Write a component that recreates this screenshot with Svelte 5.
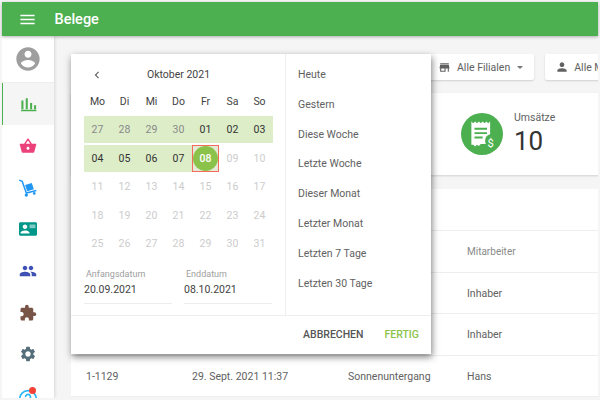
<script>
  const weekdays = ['Mo', 'Di', 'Mi', 'Do', 'Fr', 'Sa', 'So'];
  const weeks = [
    ['27', '28', '29', '30', '01', '02', '03'],
    ['04', '05', '06', '07', '08', '09', '10'],
    ['11', '12', '13', '14', '15', '16', '17'],
    ['18', '19', '20', '21', '22', '23', '24'],
    ['25', '26', '27', '28', '29', '30', '31']
  ];
  const ranges = ['Heute', 'Gestern', 'Diese Woche', 'Letzte Woche', 'Dieser Monat', 'Letzter Monat', 'Letzten 7 Tage', 'Letzten 30 Tage'];
  const rows = [
    { id: '1-1131', date: '1. Okt. 2021 09:12', shop: 'Sonnenuntergang', who: 'Inhaber' },
    { id: '1-1130', date: '30. Sept. 2021 16:48', shop: 'Sonnenuntergang', who: 'Inhaber' },
    { id: '1-1129', date: '29. Sept. 2021 11:37', shop: 'Sonnenuntergang', who: 'Hans' }
  ];

  function dayClass(w, d) {
    if (w === 0 && d < 4) return 'day in muted';
    if (w === 0) return 'day in';
    if (w === 1 && d < 4) return 'day in';
    if (w === 1 && d === 4) return 'day today';
    return 'day off';
  }
</script>

<div class="page">
  <header class="appbar">
    <svg viewBox="0 0 24 24" width="19" height="19"><path d="M3 18h18v-2H3v2zm0-5h18v-2H3v2zm0-7v2h18V6H3z" fill="#fff"/></svg>
    <span class="title">Belege</span>
  </header>

  <div class="layout">
    <nav class="sidebar">
      <div class="nav profile">
        <svg viewBox="0 0 24 24" width="28" height="28"><path fill="#9e9e9e" d="M12 2C6.48 2 2 6.48 2 12s4.48 10 10 10 10-4.48 10-10S17.52 2 12 2zm0 3c1.66 0 3 1.34 3 3s-1.34 3-3 3-3-1.34-3-3 1.34-3 3-3zm0 14.2c-2.5 0-4.71-1.28-6-3.22.03-1.99 4-3.08 6-3.08 1.99 0 5.97 1.09 6 3.08-1.29 1.94-3.5 3.22-6 3.22z"/></svg>
      </div>
      <div class="nav active">
        <svg viewBox="0 0 24 24" width="19" height="19"><path fill="#4caf50" d="M3 7h2.600v11H3zM8.500 4h2.600v14H8.500zM14 10h2.600v8H14zM19 13h2.600v5H19zM2.500 18.500h19.500V20.500H2.500z"/></svg>
      </div>
      <div class="nav">
        <svg viewBox="0 0 24 24" width="18" height="18"><path fill="#ec407a" d="M17.21 9l-4.38-6.56c-.19-.28-.51-.42-.83-.42-.32 0-.64.14-.83.43L6.79 9H2c-.55 0-1 .45-1 1 0 .09.01.18.04.27l2.54 9.27c.23.84 1 1.46 1.92 1.46h13c.92 0 1.69-.62 1.93-1.46l2.54-9.27L23 10c0-.55-.45-1-1-1h-4.79zM9 9l3-4.4L15 9H9zm3 8c-1.1 0-2-.9-2-2s.9-2 2-2 2 .9 2 2-.9 2-2 2z"/></svg>
      </div>
      <div class="nav">
        <svg viewBox="0 0 24 24" width="20" height="20">
          <path d="M1.500 2.500L5 4l5 14 12-3" fill="none" stroke="#2196f3" stroke-width="1.800"/>
          <path fill="#2196f3" d="M8.500 8.500l8-2.500 2.500 7.500-8 2.500z"/>
          <circle cx="10" cy="20.500" r="2" fill="#2196f3"/>
          <circle cx="19.500" cy="18.500" r="1.600" fill="#2196f3"/>
        </svg>
      </div>
      <div class="nav">
        <svg viewBox="0 0 24 24" width="18" height="18"><path fill="#009688" d="M22 3H2C.9 3 0 3.900 0 5v14c0 1.100.9 2 2 2h20c1.100 0 2-.9 2-2V5c0-1.100-.9-2-2-2zM8 6c1.660 0 3 1.340 3 3s-1.340 3-3 3-3-1.340-3-3 1.340-3 3-3zm6 12H2v-1c0-2 4-3.100 6-3.100s6 1.100 6 3.100v1z"/><path fill="#80cbc4" d="M14 6h8v5h-8z"/></svg>
      </div>
      <div class="nav">
        <svg viewBox="0 0 24 24" width="18" height="18"><path fill="#3f51b5" d="M16 11c1.660 0 2.990-1.340 2.990-3S17.660 5 16 5c-1.660 0-3 1.340-3 3s1.340 3 3 3zm-8 0c1.660 0 2.990-1.340 2.990-3S9.660 5 8 5C6.340 5 5 6.340 5 8s1.340 3 3 3zm0 2c-2.330 0-7 1.170-7 3.500V19h14v-2.500c0-2.330-4.670-3.500-7-3.500zm8 0c-.29 0-.62.020-.97.050 1.160.84 1.970 1.970 1.970 3.450V19h6v-2.500c0-2.330-4.670-3.500-7-3.500z"/></svg>
      </div>
      <div class="nav">
        <svg viewBox="0 0 24 24" width="18" height="18"><path fill="#795548" d="M20.500 11H19V7c0-1.100-.9-2-2-2h-4V3.500C13 2.120 11.880 1 10.500 1S8 2.120 8 3.500V5H4c-1.100 0-1.990.9-1.990 2v3.800H3.500c1.490 0 2.700 1.210 2.700 2.700s-1.210 2.700-2.700 2.700H2V20c0 1.100.9 2 2 2h3.800v-1.500c0-1.490 1.210-2.700 2.700-2.700 1.490 0 2.700 1.210 2.700 2.700V22H17c1.100 0 2-.9 2-2v-4h1.500c1.380 0 2.500-1.120 2.500-2.500S21.880 11 20.500 11z"/></svg>
      </div>
      <div class="nav">
        <svg viewBox="0 0 24 24" width="18" height="18"><path fill="#546e7a" d="M19.140 12.940c.04-.3.060-.61.060-.94 0-.32-.02-.64-.07-.94l2.030-1.580c.18-.14.23-.41.120-.61l-1.920-3.320c-.12-.22-.37-.29-.59-.22l-2.390.96c-.5-.38-1.030-.7-1.620-.94l-.36-2.540c-.04-.24-.24-.41-.48-.41h-3.840c-.24 0-.43.170-.47.410l-.36 2.540c-.59.240-1.130.57-1.620.94l-2.390-.96c-.22-.08-.47 0-.59.220L2.740 8.870c-.12.210-.08.470.12.610l2.030 1.580c-.05.300-.09.630-.09.940s.02.640.07.940l-2.030 1.580c-.18.140-.23.410-.12.610l1.920 3.320c.12.220.37.290.59.220l2.390-.96c.5.380 1.030.7 1.620.94l.36 2.540c.05.240.24.410.48.410h3.840c.24 0 .44-.17.470-.41l.36-2.540c.59-.24 1.130-.56 1.620-.94l2.390.96c.22.080.47 0 .59-.22l1.920-3.320c.12-.22.070-.47-.12-.61l-2.010-1.580zM12 15.600c-1.980 0-3.600-1.620-3.600-3.600s1.620-3.600 3.600-3.600 3.600 1.620 3.600 3.600-1.620 3.600-3.600 3.600z"/></svg>
      </div>
      <div class="nav help">
        <svg viewBox="0 0 24 24" width="20" height="20"><circle cx="12" cy="12" r="10" fill="none" stroke="#29b6f6" stroke-width="2"/><path d="M9 9.500a3 3 0 1 1 4.500 2.600c-1 .6-1.500 1.200-1.500 2.400M12 16v2" fill="none" stroke="#29b6f6" stroke-width="2"/></svg>
        <span class="dot"></span>
      </div>
    </nav>

    <main class="content">
      <div class="filters">
        <button class="filter">
          <svg viewBox="0 0 24 24" width="13" height="13"><path fill="#616161" d="M20 4H4v2h16V4zm1 10v-2l-1-5H4l-1 5v2h1v6h10v-6h4v6h2v-6h1zm-9 4H6v-4h6v4z"/></svg>
          <span>Alle Filialen</span>
          <span class="caret"></span>
        </button>
        <button class="filter second">
          <svg viewBox="0 0 24 24" width="14" height="14"><path fill="#616161" d="M12 12c2.210 0 4-1.790 4-4s-1.790-4-4-4-4 1.790-4 4 1.790 4 4 4zm0 2c-2.670 0-8 1.340-8 4v2h16v-2c0-2.660-5.330-4-8-4z"/></svg>
          <span>Alle Mitarbeiter</span>
        </button>
      </div>

      <section class="stat">
        <div class="badge">
          <svg viewBox="0 0 24 24" width="30" height="30">
            <path fill="#fff" d="M3.500 2l1.500 1.300L6.500 2 8 3.300 9.500 2 11 3.300 12.500 2 14 3.300 15.500 2 17 3.300 18.500 2v10.200a5.500 5.500 0 0 0-4 5.300c0 .9.200 1.700.6 2.500H11l-1.500 1.500L8 20.500 6.500 22 5 20.500H3.500z"/>
            <path fill="#4caf50" d="M6 7h10v1.500H6zM6 10.500h10V12H6zM6 14h6.500v1.500H6z"/>
            <text x="19" y="22.500" font-size="9" fill="#fff" text-anchor="middle" font-family="Roboto, sans-serif">$</text>
          </svg>
        </div>
        <div>
          <div class="stat-label">Umsätze</div>
          <div class="stat-value">10</div>
        </div>
      </section>

      <section class="table">
        <div class="table-title">Belege</div>
        <div class="row head">
          <span>Beleg</span><span>Datum</span><span>Filiale</span><span>Mitarbeiter</span>
        </div>
        {#each rows as row (row.id)}
          <div class="row">
            <span>{row.id}</span><span>{row.date}</span><span>{row.shop}</span><span>{row.who}</span>
          </div>
        {/each}
      </section>

      <div class="popup">
        <div class="popup-main">
          <div class="calendar">
            <div class="month">
              <svg viewBox="0 0 24 24" width="14" height="14"><path fill="#616161" d="M15.410 7.410L14 6l-6 6 6 6 1.410-1.410L10.830 12z"/></svg>
              <span>Oktober 2021</span>
            </div>
            <div class="weekdays">
              {#each weekdays as d}<span>{d}</span>{/each}
            </div>
            {#each weeks as week, w}
              <div class="week">
                {#each week as day, d}
                  <span class={dayClass(w, d)}><span class="num">{day}</span></span>
                {/each}
              </div>
            {/each}
            <div class="dates">
              <div class="date-field">
                <span>Anfangsdatum</span>
                <b>20.09.2021</b>
              </div>
              <div class="date-field">
                <span>Enddatum</span>
                <b>08.10.2021</b>
              </div>
            </div>
          </div>
          <ul class="ranges">
            {#each ranges as r}<li>{r}</li>{/each}
          </ul>
        </div>
        <div class="actions">
          <span class="cancel">ABBRECHEN</span>
          <span class="done">FERTIG</span>
        </div>
      </div>
    </main>
  </div>
</div>

<style>
  :global(body){margin:0;background:#fff}
  .page{box-sizing:border-box;width:600px;height:400px;padding:2px;overflow:hidden;font-family:Roboto,"Liberation Sans",sans-serif;color:#424242;background:#f5f5f5}
  .appbar{height:34px;background:#4caf50;display:flex;align-items:center;gap:18px;padding-left:15.500px;box-shadow:0 1px 3px rgba(0,0,0,.3);position:relative;z-index:2}
  .title{color:#fff;font-size:14.500px;font-weight:500}
  .layout{display:flex;height:362px;overflow:hidden}
  .sidebar{width:52px;flex:none;background:#fff;display:flex;flex-direction:column;box-shadow:1px 0 3px rgba(0,0,0,.12)}
  .nav{height:41.700px;flex:none;display:flex;align-items:center;justify-content:center;position:relative}
  .profile{height:47px;border-bottom:1px solid #eee;box-sizing:border-box}
  .active{height:42px;background:#f5f5f5;border-left:1px solid #4caf50;box-sizing:border-box}
  .help{align-items:flex-start;padding-top:14px;box-sizing:border-box}
  .dot{position:absolute;left:27px;top:12px;width:7px;height:7px;border-radius:50%;background:#f44336}
  .content{position:relative;flex:1;min-width:0;padding:18px 0 0 17px;overflow:hidden}
  .filters{display:flex;gap:11px;height:26px;margin-left:357px;width:300px}
  .filter{flex:none;display:flex;align-items:center;gap:6px;height:26px;padding:0 11px 0 10px;border:0;border-radius:2px;background:#fff;color:#616161;font:10.500px Roboto,sans-serif;box-shadow:0 1px 2px rgba(0,0,0,.15)}
  .second{gap:5px}
  .caret{width:0;height:0;border:3px solid transparent;border-top-color:#757575;border-bottom:0;margin-left:1px}
  .stat{margin-top:13px;height:82px;width:540px;background:#fff;display:flex;align-items:center;padding-left:390px;box-sizing:border-box;gap:11px;box-shadow:0 1px 2px rgba(0,0,0,.15)}
  .badge{width:42px;height:42px;border-radius:50%;background:#4caf50;display:flex;align-items:center;justify-content:center}
  .stat-label{font-size:10.500px;line-height:12px;color:#616161}
  .stat-value{font-size:26px;line-height:32px;margin-top:1px;color:#333}
  .table{margin-top:14px;width:540px;background:#fff}
  .table-title{height:42px;box-sizing:border-box;border-bottom:1px solid #eee;font-size:13px;line-height:41px;padding-left:15px}
  .row{box-sizing:border-box;display:grid;grid-template-columns:106px 156px 119px 1fr;height:41.500px;align-items:center;padding:1px 0 0 15px;border-bottom:1px solid #eee;font-size:10.500px;color:#616161}
  .head{color:#8a8a8a;font-size:10px;padding-top:0}
  .popup{position:absolute;left:17px;top:18px;width:360px;height:300px;background:#fff;display:flex;flex-direction:column;box-shadow:1px 3px 7px rgba(0,0,0,.5)}
  .popup-main{display:flex;height:261px;border-bottom:1px solid #eee}
  .calendar{width:201px;border-right:1px solid #eee;padding-left:13px}
  .month{position:relative;height:41px;display:flex;align-items:center;justify-content:center;font-size:10.500px;color:#424242;width:189px}
  .month svg{position:absolute;left:6px}
  .weekdays,.week{display:grid;grid-template-columns:repeat(7,27px);width:189px;text-align:center}
  .weekdays{height:14px;line-height:14px;font-size:10.500px;color:#424242;margin-bottom:7px}
  .week{height:27px;margin-bottom:1.500px;font-size:10.500px;align-items:stretch}
  .day{display:flex;align-items:center;justify-content:center;position:relative}
  .in{background:#dcedc8;color:#333}
  .muted{color:#8a8a8a}
  .off{color:#ccc}
  .today{box-sizing:border-box;border:1px solid #f26b5b;background:#e4ead6;color:#fff;font-weight:500}
  .today::before{content:"";position:absolute;inset:-1px;margin:auto;width:25px;height:25px;border-radius:50%;background:#8bc34a}
  .num{position:relative}
  .dates{display:flex;gap:12px;margin-top:10px}
  .date-field{width:88px;height:36px;display:flex;flex-direction:column;border-bottom:1px solid #eee}
  .date-field span{font-size:9px;color:#9e9e9e;padding-left:2px;line-height:14px}
  .date-field b{font-weight:400;font-size:10.500px;color:#424242;line-height:18px}
  .ranges{list-style:none;margin:0;padding:6px 0 0 12px;font-size:10.500px;color:#616161;flex:1}
  .ranges li{height:29.800px;line-height:29.800px}
  .actions{flex:1;display:flex;align-items:center;justify-content:flex-end;gap:21px;padding:0 12px 1px 0;font-size:10.500px;font-weight:500}
  .cancel{color:#555}
  .done{color:#8bc34a}
</style>
